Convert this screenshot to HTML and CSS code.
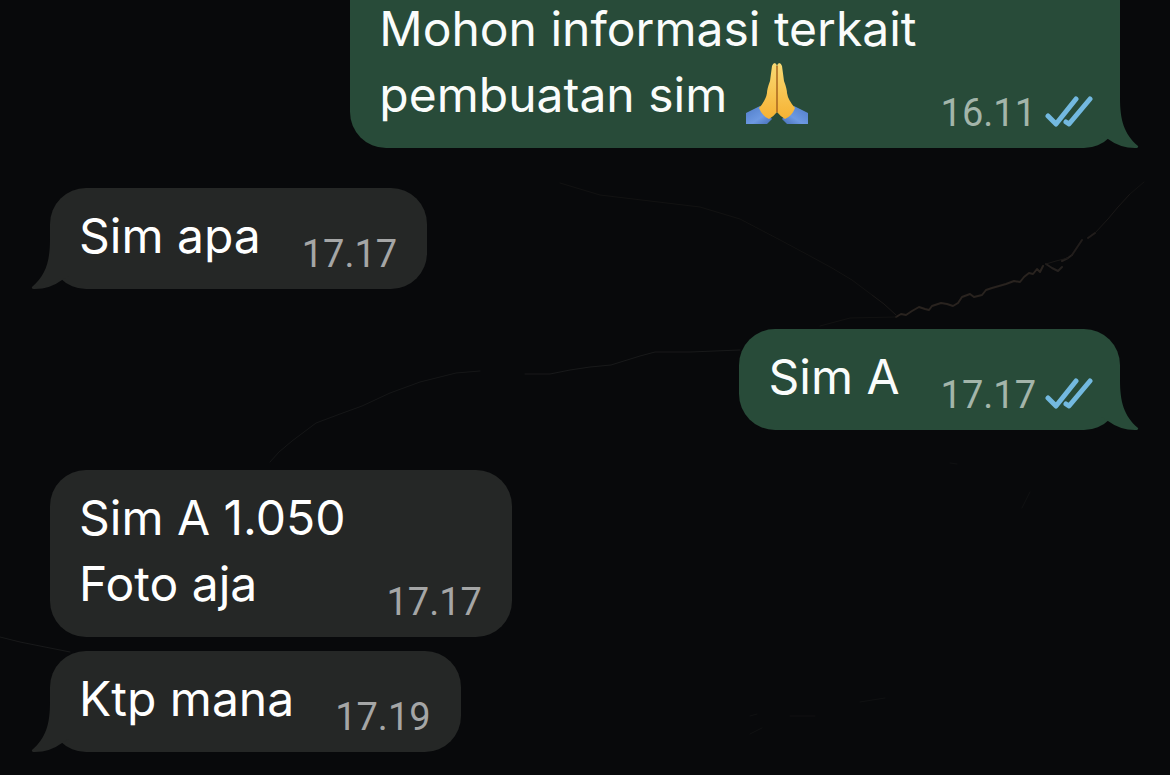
FILE: index.html
```
<!DOCTYPE html>
<html lang="id">
<head>
    <meta charset="UTF-8">
    <meta name="viewport" content="width=device-width, initial-scale=1.0">
    <title>Chat</title>
    <link rel="stylesheet" href="styles.css">
</head>
<body>
    <!-- shared shapes -->
    <svg class="defs" aria-hidden="true">
        <symbol id="tail" viewBox="0 0 40 60">
            <path d="M0 0H20V10C20 32 24 46 38 58Q39 60 35 60Q20 60 8 51L0 46Z"/>
        </symbol>
        <symbol id="ticks" viewBox="0 0 48 36">
            <path d="M3 21L11 29L31 4M21 27L24 29L45 4" fill="none" stroke="currentColor" stroke-width="5" stroke-linecap="round" stroke-linejoin="round"/>
        </symbol>
    </svg>

    <!-- dark marble wallpaper -->
    <svg class="wallpaper" viewBox="0 0 1170 775" preserveAspectRatio="xMidYMid slice" aria-hidden="true">
        <g fill="none" stroke-linecap="round" stroke-linejoin="round">
            <path stroke="#29231f" stroke-width="2" d="M896 317L901 314L906 315L912 311L919 307L925 309L929 310L932 306L941 303L947 304L953 306L958 303L962 297L970 294L974 297L982 295L986 290L992 288L1006 284L1014 281L1020 282L1024 277L1029 273L1033 274L1037 269L1040 272L1043 266"/>
            <path stroke="#25211f" stroke-width="2" d="M1046 264L1052 268L1058 271L1062 267M1062 261L1068 258L1072 255"/>
            <path stroke="#211d1b" stroke-width="2" d="M1072 255L1076 249L1082 240M1088 238L1095 233"/>
            <path stroke="#1a1817" stroke-width="1" d="M1046 264L1056 261L1068 258M896 315L884 304L872 295M1095 233L1108 219L1118 207L1130 194"/>
            <path stroke="#121212" stroke-width="1" d="M1130 194L1144 182M872 295L852 280L832 268L810 256L782 241L740 219L700 207L650 201L600 195L560 183M896 317L850 318L820 326"/>
            <path stroke="#151617" stroke-width="1" d="M270 462L279 452L292 441L304 432L316 423L340 414L362 406L390 393L420 382L456 373L480 371"/>
            <path stroke="#18191a" stroke-width="1" d="M525 374L550 374L570 370L590 367L611 365L640 356L655 352L690 352L740 350"/>
            <path stroke="#18191a" stroke-width="1" d="M0 637L20 642L40 646L70 652"/>
            <path stroke="#101112" stroke-width="1" d="M750 716L757 714M750 734L762 728M790 716L815 716M860 702L885 698M950 463L957 464M1022 508L1030 492"/>
        </g>
    </svg>

    <main class="chat">
        <div class="message sent continued">
            <p class="text">Mohon informasi terkait<br>pembuatan sim
                <svg class="emoji" viewBox="0 0 64 64" role="img" aria-label="🙏">
                    <defs>
                        <linearGradient id="skin" x1="0" y1="0" x2="0" y2="1">
                            <stop offset="0" stop-color="#f9da74"/>
                            <stop offset="1" stop-color="#f6b233"/>
                        </linearGradient>
                        <linearGradient id="sleeve" x1="0" y1="0" x2="1" y2="1">
                            <stop offset="0" stop-color="#4f7cc8"/>
                            <stop offset="0.6" stop-color="#6d99e2"/>
                            <stop offset="1" stop-color="#456db5"/>
                        </linearGradient>
                    </defs>
                    <g id="hand">
                        <path fill="url(#sleeve)" d="M1 51L15 44L27 57L22 62H1Z"/>
                        <path fill="url(#skin)" d="M27 4Q28 1 30 1Q32 2 32 5V50Q29 54 24 57Q17 54 14 46Q21 38 22 31Q22 27 25 19Z"/>
                    </g>
                    <use href="#hand" transform="translate(64 0) scale(-1 1)"/>
                    <path d="M32 4V50" stroke="#a8651f" stroke-width="1.5" fill="none"/>
                </svg>
            </p>
            <div class="meta">
                <time datetime="16:11">16.11</time>
                <svg class="ticks" role="img" aria-label="Dibaca"><use href="#ticks"/></svg>
            </div>
            <svg class="tail" aria-hidden="true"><use href="#tail"/></svg>
        </div>

        <div class="message received">
            <p class="text">Sim apa</p>
            <div class="meta"><time datetime="17:17">17.17</time></div>
            <svg class="tail" aria-hidden="true"><use href="#tail"/></svg>
        </div>

        <div class="message sent">
            <p class="text">Sim A</p>
            <div class="meta">
                <time datetime="17:17">17.17</time>
                <svg class="ticks" role="img" aria-label="Dibaca"><use href="#ticks"/></svg>
            </div>
            <svg class="tail" aria-hidden="true"><use href="#tail"/></svg>
        </div>

        <div class="group">
            <div class="message received">
                <p class="text">Sim A 1.050<br>Foto aja</p>
                <div class="meta"><time datetime="17:17">17.17</time></div>
            </div>
            <div class="message received">
                <p class="text">Ktp mana</p>
                <div class="meta"><time datetime="17:19">17.19</time></div>
                <svg class="tail" aria-hidden="true"><use href="#tail"/></svg>
            </div>
        </div>
    </main>
</body>
</html>
```
FILE: styles.css
```
* {
    box-sizing: border-box;
}
body {
    margin: 0;
    background-color: #08090b;
    color: #fafcfb;
    font-family: Inter, "Liberation Sans", sans-serif;
    font-size: 48px;
    line-height: 66px;
}
.defs {
    position: absolute;
    width: 0;
    height: 0;
}
.wallpaper {
    position: absolute;
    top: 0;
    left: 0;
    width: 100%;
    height: 100%;
}
/* newest message stays at the bottom of the window */
.chat {
    position: relative;
    display: flex;
    flex-direction: column;
    justify-content: flex-end;
    gap: 40px;
    height: 100vh;
    padding: 0 50px 23px;
    overflow: hidden;
}
.group {
    display: flex;
    flex-direction: column;
    gap: 14px;
}
.message {
    position: relative;
    display: flex;
    flex-shrink: 0;
    align-items: flex-end;
    gap: 41px;
    padding: 15px 30px 20px 29px;
    border-radius: 36px;
    white-space: nowrap;
}
.received {
    align-self: flex-start;
    background-color: #252726;
    color: #ffffff;
}
.sent {
    align-self: flex-end;
    padding-right: 27px;
    background-color: #284b39;
}
.continued {
    gap: 24px;
    padding-top: 80px;
}
.text {
    margin: 0;
}
.emoji {
    width: 64px;
    height: 64px;
    margin-left: 4px;
    vertical-align: -14px;
}
.meta {
    display: flex;
    align-items: center;
    gap: 9px;
    margin-bottom: -18px;
    margin-left: auto;
    color: #a5a6a6;
    font-family: Roboto, "Liberation Sans", sans-serif;
    font-size: 38px;
}
.sent .meta {
    color: #a3b5aa;
}
.ticks {
    width: 48px;
    height: 36px;
    color: #73b9e0;
}
.tail {
    position: absolute;
    right: -20px;
    bottom: 0;
    width: 40px;
    height: 60px;
    fill: #284b39;
}
.received .tail {
    right: auto;
    left: -20px;
    fill: #252726;
    transform: scaleX(-1);
}
```
